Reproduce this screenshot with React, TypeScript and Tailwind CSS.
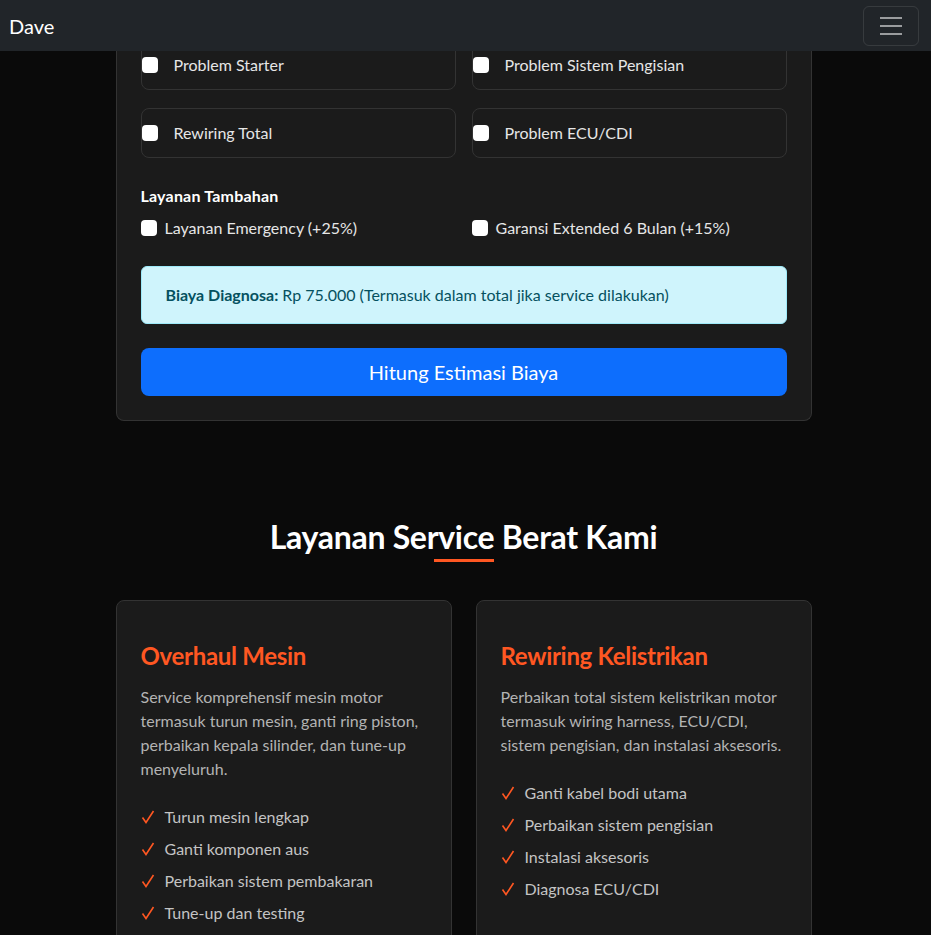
import React from "react";

const problems = [
  "Problem Starter",
  "Problem Sistem Pengisian",
  "Rewiring Total",
  "Problem ECU/CDI",
];

const extras = ["Layanan Emergency (+25%)", "Garansi Extended 6 Bulan (+15%)"];

const services = [
  {
    title: "Overhaul Mesin",
    desc: "Service komprehensif mesin motor termasuk turun mesin, ganti ring piston, perbaikan kepala silinder, dan tune-up menyeluruh.",
    items: [
      "Turun mesin lengkap",
      "Ganti komponen aus",
      "Perbaikan sistem pembakaran",
      "Tune-up dan testing",
    ],
  },
  {
    title: "Rewiring Kelistrikan",
    desc: "Perbaikan total sistem kelistrikan motor termasuk wiring harness, ECU/CDI, sistem pengisian, dan instalasi aksesoris.",
    items: [
      "Ganti kabel bodi utama",
      "Perbaikan sistem pengisian",
      "Instalasi aksesoris",
      "Diagnosa ECU/CDI",
    ],
  },
];

function Box() {
  return <span className="block w-4 h-4 shrink-0 rounded-[4px] bg-white" />;
}

function Check() {
  return (
    <svg width="24" height="24" viewBox="0 0 24 24" className="shrink-0">
      <path
        d="M1.5 12.5 L5 17.5 L12.5 6"
        fill="none"
        stroke="#ff5722"
        strokeWidth="1.6"
      />
    </svg>
  );
}

export default function App(): ReturnType<React.FC> {
  return (
    <div className="min-h-screen bg-[#0a0a0a] font-['Lato',sans-serif] text-white">
      <nav className="fixed top-0 inset-x-0 z-10 h-[51px] bg-[#212529] flex items-center justify-between pl-[9px] pr-3">
        <span className="text-xl leading-none">Dave</span>
        <button className="w-14 h-10 rounded-md border border-white/10 flex items-center justify-center">
          <svg width="30" height="30" viewBox="0 0 30 30">
            <path
              d="M4 7h22M4 15h22M4 23h22"
              stroke="rgba(255,255,255,0.55)"
              strokeWidth="2"
            />
          </svg>
        </button>
      </nav>

      <div className="flex justify-center pr-1">
        <main className="w-[696px] pb-10">
          <section className="bg-[#1b1b1b] border border-t-0 border-[#333] rounded-b-lg px-6 pt-10 pb-6">
            <div className="grid grid-cols-2 gap-x-4 gap-y-[18px]">
              {problems.map((p) => (
                <label
                  key={p}
                  className="h-[50px] border border-[#333] rounded-lg flex items-center gap-4 text-[#e6e6e6]"
                >
                  <Box />
                  <span>{p}</span>
                </label>
              ))}
            </div>

            <h4 className="mt-[26px] font-bold leading-6 tracking-[0.2px]">Layanan Tambahan</h4>
            <div className="grid grid-cols-2 gap-x-4 mt-2">
              {extras.map((e) => (
                <label key={e} className="h-6 flex items-center gap-2 text-[#e6e6e6]">
                  <Box />
                  <span>{e}</span>
                </label>
              ))}
            </div>

            <div className="mt-[26px] h-[58px] rounded-md border border-[#9eeaf9] bg-[#cff4fc] text-[#055160] px-6 flex items-center">
              <p>
                <strong>Biaya Diagnosa:</strong> Rp 75.000 (Termasuk dalam total
                jika service dilakukan)
              </p>
            </div>

            <button className="mt-6 w-full h-12 rounded-lg bg-[#0d6efd] text-xl text-white">
              Hitung Estimasi Biaya
            </button>
          </section>

          <section className="mt-[97px]">
            <h2 className="text-[32px] leading-[38px] font-bold text-center tracking-[-0.3px]">
              Layanan Service Berat Kami
            </h2>
            <div className="mx-auto mt-[3px] w-[60px] h-[3px] bg-[#ff5722]" />

            <div className="grid grid-cols-2 gap-x-6 mt-[38px]">
              {services.map((s) => (
                <div
                  key={s.title}
                  className="bg-[#1b1b1b] border border-[#333] rounded-lg px-6 pt-10 pb-6"
                >
                  <h3 className="text-2xl leading-[29px] font-bold text-[#ff5722] tracking-[-0.3px]">
                    {s.title}
                  </h3>
                  <p className="mt-[15px] leading-6 text-[#b3b3b3]">{s.desc}</p>
                  <ul className="mt-5">
                    {s.items.map((i) => (
                      <li key={i} className="py-1 leading-6 flex text-[#c4c4c4]">
                        <Check />
                        {i}
                      </li>
                    ))}
                  </ul>
                </div>
              ))}
            </div>
          </section>
        </main>
      </div>
    </div>
  );
}
